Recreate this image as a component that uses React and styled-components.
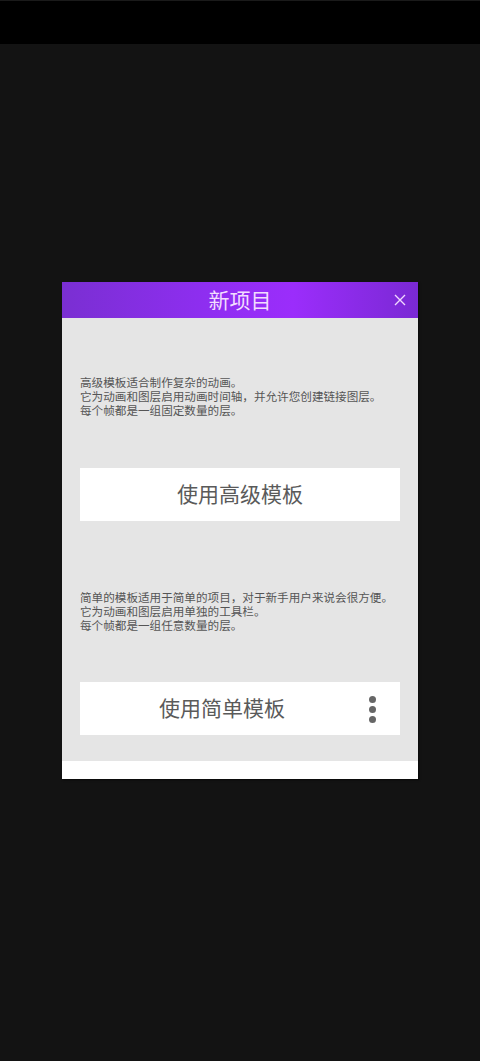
import React from "react";
import styled, { createGlobalStyle } from "styled-components";

const Global = createGlobalStyle`
  html, body { margin: 0; padding: 0; background: #131313; }
  body { font-family: "Noto Sans CJK SC", "Noto Sans", sans-serif; }
`;

const Screen = styled.div`
  width: 480px;
  height: 1061px;
  display: flex;
  flex-direction: column;
  background: #131313;
  overflow: hidden;
`;

const StatusBar = styled.div`
  height: 43px;
  background: #000;
  border-top: 1px solid #1a1a1a;
  flex: none;
`;

const Stage = styled.div`
  flex: 1;
  display: flex;
  justify-content: center;
  padding-top: 238px;
`;

const Dialog = styled.div`
  width: 356px;
  height: 497px;
  display: flex;
  flex-direction: column;
  background: #fff;
  box-shadow: 1px 1px 2px rgba(0, 0, 0, 0.6);
`;

const Header = styled.div`
  position: relative;
  height: 36px;
  padding-bottom: 3px;
  box-sizing: border-box;
  display: flex;
  align-items: center;
  justify-content: center;
  background: linear-gradient(90deg, #7a2fd2 0%, #8e2ef0 40%, #9b2dfb 65%, #7a29d4 100%);
  color: #f2dcff;
  font-size: 21px;
  flex: none;
`;

const Close = styled.button`
  position: absolute;
  right: 10px;
  top: 10px;
  width: 16px;
  height: 16px;
  padding: 0;
  border: 0;
  background: none;
  display: flex;
  align-items: center;
  justify-content: center;
`;

const Body = styled.div`
  height: 443px;
  background: #e5e5e5;
  padding: 0 18px;
  display: flex;
  flex-direction: column;
  flex: none;
`;

const Desc = styled.p`
  margin: ${(p) => p.$top}px 0 0;
  font-size: 11.6px;
  line-height: 14px;
  color: #555;
  white-space: pre;
`;

const Choice = styled.div`
  position: relative;
  margin-top: ${(p) => p.$top}px;
  height: 53px;
  box-sizing: border-box;
  padding: 0 ${(p) => (p.$menu ? 36 : 0)}px 3px 0;
  background: #fff;
  display: flex;
  align-items: center;
  justify-content: center;
  font-size: 21px;
  color: #5a5a5a;
`;

const More = styled.div`
  position: absolute;
  right: 24px;
  top: 14px;
  display: flex;
  flex-direction: column;
  gap: 3px;
  span {
    width: 7px;
    height: 7px;
    border-radius: 50%;
    background: #666;
  }
`;

export default function App() {
  return (
    <Screen>
      <Global />
      <StatusBar />
      <Stage>
        <Dialog>
          <Header>
            新项目
            <Close aria-label="close">
              <svg width="12" height="12" viewBox="0 0 12 12">
                <path d="M1 1L11 11M11 1L1 11" stroke="#f0d8ff" strokeWidth="1.4" />
              </svg>
            </Close>
          </Header>
          <Body>
            <Desc $top={57}>
              {"高级模板适合制作复杂的动画。\n它为动画和图层启用动画时间轴，并允许您创建链接图层。\n每个帧都是一组固定数量的层。"}
            </Desc>
            <Choice $top={51}>使用高级模板</Choice>
            <Desc $top={69}>
              {"简单的模板适用于简单的项目，对于新手用户来说会很方便。\n它为动画和图层启用单独的工具栏。\n每个帧都是一组任意数量的层。"}
            </Desc>
            <Choice $top={50} $menu>
              使用简单模板
              <More>
                <span />
                <span />
                <span />
              </More>
            </Choice>
          </Body>
        </Dialog>
      </Stage>
    </Screen>
  );
}
